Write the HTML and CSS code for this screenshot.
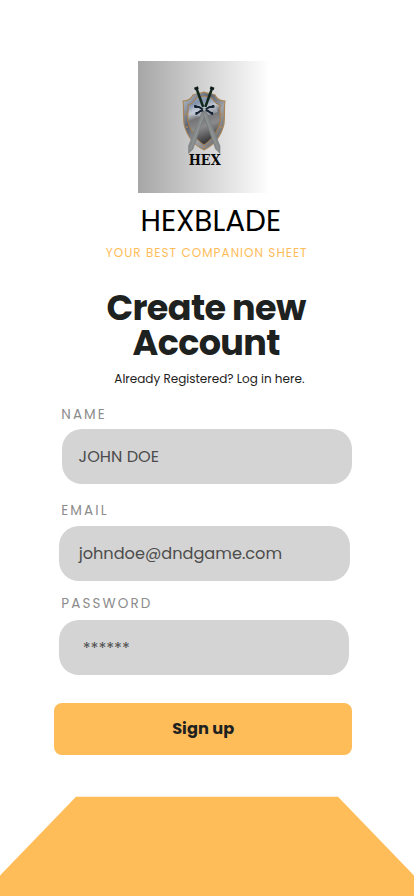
FILE: index.html
```html
<!DOCTYPE html>
<html lang="en">
<head>
<meta charset="utf-8">
<meta name="viewport" content="width=device-width, initial-scale=1">
<title>Hexblade – Create new account</title>
<link rel="stylesheet" href="styles.css">
</head>
<body>
<main class="screen">
  <div class="logo">
    <svg viewBox="0 0 132 132" width="132" height="132" role="img" aria-label="Hex">
      <defs>
        <linearGradient id="steel" x1="0" y1="0" x2=".25" y2="1">
          <stop offset="0" stop-color="#a4acb8"/><stop offset=".2" stop-color="#8393ae"/>
          <stop offset=".36" stop-color="#c3c8d1"/><stop offset=".5" stop-color="#747477"/>
          <stop offset=".7" stop-color="#8b8b8c"/><stop offset="1" stop-color="#3d3d40"/>
        </linearGradient>
        <linearGradient id="rim" x1="0" y1="0" x2="1" y2="1">
          <stop offset="0" stop-color="#c3cbd7"/><stop offset=".35" stop-color="#5a6170"/>
          <stop offset=".6" stop-color="#a0a2a8"/><stop offset="1" stop-color="#4f4c49"/>
        </linearGradient>
        <g id="sword">
          <path d="M64.300 50 67.800 51.500 55 88 50.500 92.500 50.500 85Z" fill="#858989" stroke="#737979" stroke-width=".5"/>
          <path d="M66 53 52.500 88" stroke="#989d9c" stroke-width=".7"/>
          <path d="M74 27.500 67.300 46" stroke="#10271d" stroke-width="2.500"/>
          <path d="M72.200 26.500 76 28" stroke="#111c1a" stroke-width="2.600"/>
          <path d="M56 45.500 61 46 65 48.500 70 50 75 53.500M57.500 44v3M74 51v3" fill="none" stroke="#142231" stroke-width="2"/>
        </g>
      </defs>
      <path d="M66 31C62 33 58 32 55 34 53 38 50 40 45 40 46 46 45 53 46 63 49 76 56 84 66 89 76 84 83 76 86 63 87 53 86 46 87 40 82 40 79 38 77 34 74 32 70 33 66 31Z" fill="url(#rim)" stroke="#a98658" stroke-width="1.100"/>
      <path d="M66 35C63 36 60 36 58 37 56 41 54 43 50 44 51 48 49 54 50 61 53 72 59 79 66 84 73 79 79 72 82 61 83 54 81 48 82 44 78 43 76 41 74 37 71 36 69 36 66 35Z" fill="url(#steel)" stroke="#a77c45"/>
      <path d="M55 45C61 42 70 48 78 45L80 51C73 52 68 58 53 54Z" fill="#c3ccdb" opacity=".45"/>
      <g fill="#b98852"><circle cx="48" cy="53" r=".9"/><circle cx="84" cy="53" r=".9"/><circle cx="49" cy="66" r=".9"/><circle cx="83" cy="66" r=".9"/><circle cx="66" cy="86" r=".9"/></g>
      <use href="#sword"/>
      <use href="#sword" transform="matrix(-1 0 0 1 132.500 0)"/>
      <circle cx="66.300" cy="48.500" r="1.500" fill="#a9b0b3"/>
      <text class="logo-text" x="66.700" y="103.700" text-anchor="middle" textLength="32" lengthAdjust="spacingAndGlyphs">HEX</text>
    </svg>
  </div>
  <div class="brand">HEXBLADE</div>
  <p class="tagline">YOUR BEST COMPANION SHEET</p>
  <h1 class="title"><span class="title-first">Create new</span><br><span class="title-second">Account</span></h1>
  <p class="login">Already Registered? Log in here.</p>
  <form class="form">
    <div class="label label-name">NAME</div>
    <div class="field field-name"><span class="value-name">JOHN DOE</span></div>
    <div class="label label-email">EMAIL</div>
    <div class="field field-email"><span class="value-email">johndoe@dndgame.com</span></div>
    <div class="label label-password">PASSWORD</div>
    <div class="field field-password"><span class="value-password">******</span></div>
    <button class="signup" type="button">Sign up</button>
  </form>
  <svg class="base" viewBox="0 0 414 100" width="414" height="100" aria-hidden="true"><path d="M76 .7H338L414 79.500V100H0V79.500Z" fill="#ffbd59"/></svg>
</main>
</body>
</html>
```
FILE: styles.css
```css
* { box-sizing: border-box; }
body { margin: 0; background: #fff; }
.screen {
  display: flex;
  flex-direction: column;
  width: 414px;
  height: 896px;
  padding-top: 61px;
  overflow: hidden;
  font-family: Poppins, Inter, sans-serif;
  color: #1d2120;
  white-space: nowrap;
}
.logo { width: 132px; height: 132px; margin-left: 138px; background: linear-gradient(90deg, #a6a6a6, #fff); }
.logo svg { display: block; }
.logo-text { font: bold 15.500px "DejaVu Serif", serif; fill: #090909; }
.brand { height: 40px; margin: 7.500px 0 0 140.500px; font-size: 29.500px; line-height: 40px; font-weight: 400; color: #000; }
.tagline { height: 18px; margin: 3.500px 0 0 105.700px; font-size: 12px; line-height: 18px; font-weight: 400; letter-spacing: 1.040px; color: #ffbd59; }
.title { height: 70px; margin: 28px 0 0 106.500px; font-size: 35px; line-height: 35px; font-weight: 700; letter-spacing: -.65px; }
.title-second { margin-left: 26px; }
.login { height: 18px; margin: 10px 0 0 114.300px; font-size: 12px; line-height: 18px; }
.form { display: flex; flex-direction: column; height: 367px; margin-top: 16px; }
.label { height: 20px; margin-left: 61.300px; font-size: 13.500px; line-height: 22px; font-weight: 400; letter-spacing: 2.100px; color: #8c8c8c; }
.field { width: 290.700px; height: 55px; border-radius: 20px; background: #d4d4d4; color: #4c4c4c; font-size: 16.150px; line-height: 55px; }
.field-name { margin: 5px 0 0 61.600px; padding-left: 17px; }
.label-email { margin-top: 16px; }
.field-email { margin: 6px 0 0 59.200px; padding-left: 19.500px; }
.label-password { margin-top: 12px; }
.field-password { margin: 7px 0 0 58.700px; padding-left: 24px; line-height: 57px; }
.signup { flex: none; width: 298.300px; height: 52px; margin: 28px 0 0 54px; padding: 0; border: 0; border-radius: 8px; background: #ffbd59; color: #1d2120; font: 700 16.200px/52px Poppins, Inter, sans-serif; }
.base { display: block; flex: none; margin-top: auto; }
```
